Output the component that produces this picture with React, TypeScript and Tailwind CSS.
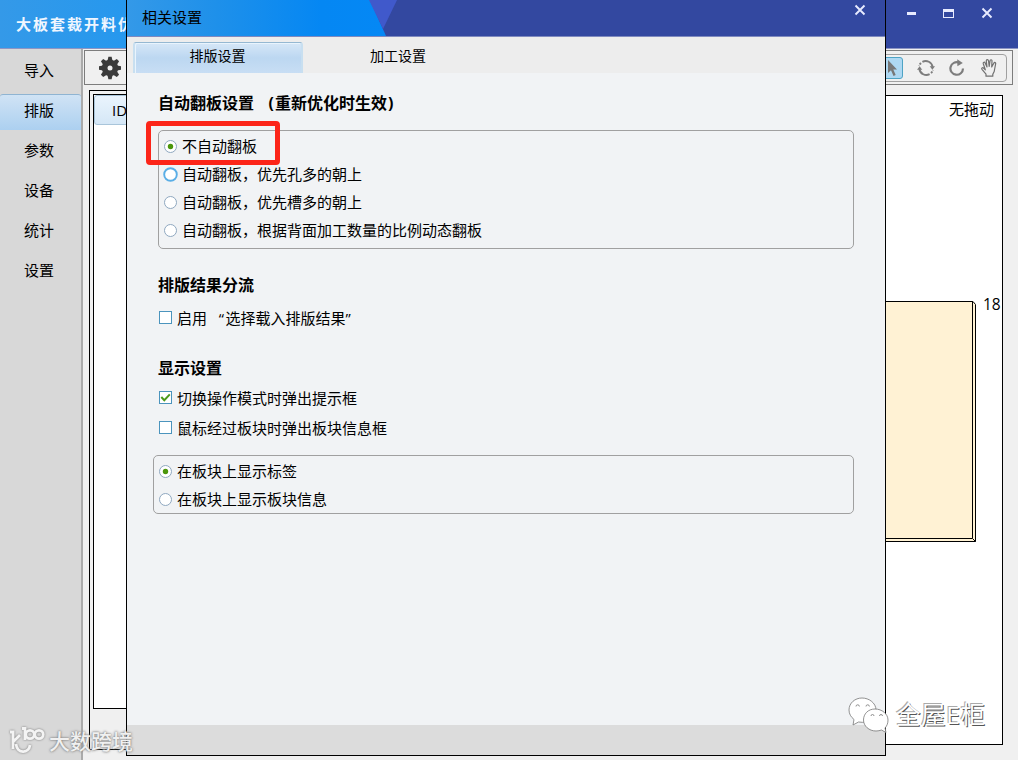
import React, { useState } from "react";
import clsx from "clsx";

const menuItems = ["导入", "排版", "参数", "设备", "统计", "设置"];

const flipModes = [
    "不自动翻板",
    "自动翻板，优先孔多的朝上",
    "自动翻板，优先槽多的朝上",
    "自动翻板，根据背面加工数量的比例动态翻板",
];

const labelModes = ["在板块上显示标签", "在板块上显示板块信息"];

const CloseIcon = () => (
    <svg width="12" height="12" viewBox="0 0 12 12" fill="none" stroke="#e8ebff" strokeWidth="1.9">
        <path d="M1.5 1.5 10.5 10.5M10.5 1.5 1.5 10.5" />
    </svg>
);

const GearIcon = () => (
    <svg width="22" height="24" viewBox="-11 -12 22 24" fill="#3b3b3b">
        {[0, 45, 90, 135].map((a) => (
            <path key={a} d="M-2.6 -7 L-1.6 -11.2 H1.6 L2.6 -7 V7 L1.6 11.2 H-1.6 L-2.6 7Z" transform={`rotate(${a})`} />
        ))}
        <circle r="8.2" />
        <circle r="2.5" fill="#f0f0f0" />
    </svg>
);

const Radio = ({ label, checked, hot, onSelect }: { label: string; checked: boolean; hot?: boolean; onSelect: () => void }) => (
    <button onClick={onSelect} className="flex h-7 items-center gap-1 text-left">
        <svg width="15" height="15" viewBox="0 0 15 15">
            <circle cx="7.5" cy="7.5" r={hot ? 6.3 : 6} fill="#fff" stroke={hot ? "#5aaee6" : "#8fa8c0"} strokeWidth={hot ? 1.9 : 1} />
            {checked && <circle cx="7.5" cy="7.5" r="2.7" fill="#4b960b" />}
        </svg>
        <span>{label}</span>
    </button>
);

const Check = ({ label, checked, onToggle }: { label: React.ReactNode; checked: boolean; onToggle: () => void }) => (
    <button onClick={onToggle} className="flex h-[30px] items-center gap-[5px] text-left">
        <span className="mb-0.5 flex h-[13px] w-[13px] items-center justify-center border border-[#4b94bd] bg-white">
            {checked && (
                <svg width="11" height="11" viewBox="0 0 11 11" fill="none" stroke="#4b9a1a" strokeWidth="2">
                    <path d="M1.3 5 4.3 8.2 9.8 2.4" />
                </svg>
            )}
        </span>
        <span>{label}</span>
    </button>
);

const SettingsDialog = () => {
    const [flip, setFlip] = useState(0);
    const [labelMode, setLabelMode] = useState(0);
    const [split, setSplit] = useState(false);
    const [modeTip, setModeTip] = useState(true);
    const [hoverTip, setHoverTip] = useState(false);

    return (
        <div className="absolute top-0 left-[126px] flex h-[756px] w-[760px] flex-col border-x border-b border-black bg-[#f1f3f5]">
            <header className="relative flex h-[37px] shrink-0 justify-between border-b border-[#7f8abf] bg-[#3348a0]">
                <svg className="absolute top-0 left-0" width="300" height="36" viewBox="0 0 300 36">
                    <defs>
                        <linearGradient id="dialogBlue">
                            <stop offset="0" stopColor="#3499e8" />
                            <stop offset="0.35" stopColor="#1e90ea" />
                            <stop offset="0.75" stopColor="#0587f3" />
                            <stop offset="1" stopColor="#0588f5" />
                        </linearGradient>
                    </defs>
                    <path d="M0 0H243L259 36H0Z" fill="url(#dialogBlue)" />
                    <path d="M242 0H270L256 29Z" fill="#4059cb" />
                </svg>
                <span className="relative pl-[15px] leading-[34px]">相关设置</span>
                <button className="mt-1 mr-[19px] h-3 w-3">
                    <CloseIcon />
                </button>
            </header>

            <nav className="flex h-9 shrink-0 bg-[#ededed] pt-[5px] pl-1.5 text-[14px]">
                <div className="h-[31px] w-[170px] rounded-t-[3px] border-x-2 border-t border-x-[#c8dff0] border-t-[#95b8d2] bg-gradient-to-b from-[#d6e7f7] via-[#bcd7f1] to-[#c8def4] pr-px text-center leading-[26px] shadow-[inset_1px_1px_0_#e9f4fd]">
                    排版设置
                </div>
                <div className="w-[190px] text-center leading-[27px]">加工设置</div>
            </nav>

            <section className="flex grow flex-col px-[31px]">
                <h3 className="mt-4 h-7 text-[16px] leading-7 font-bold whitespace-pre">
                    <span className="mr-0.5">自动翻板设置   </span>(<span className="mx-px">重新优化时生效</span>)
                </h3>
                <div className="relative mt-[13px] flex h-[119px] w-[696px] flex-col rounded-[5px] border border-[#a0a0a0] pt-px pl-1">
                    {flipModes.map((m, i) => (
                        <Radio key={m} label={m} checked={flip === i} hot={i === 1} onSelect={() => setFlip(i)} />
                    ))}
                    {/* highlight around the default choice */}
                    <div className="absolute -top-[10px] -left-[13px] h-[44px] w-[134px] rounded-[4px] border-[5px] border-[#fc2519]" />
                </div>

                <h3 className="mt-[22px] h-7 text-[16px] leading-7 font-bold">排版结果分流</h3>
                <div className="mt-1 pl-px">
                    <Check
                        label={
                            <span className="whitespace-pre">
                                启用   <span className="tracking-[1.5px]">“</span>选择载入排版结果<span className="tracking-[1px]">”</span>
                            </span>
                        }
                        checked={split}
                        onToggle={() => setSplit(!split)}
                    />
                </div>

                <h3 className="mt-[21px] h-7 text-[16px] leading-7 font-bold">显示设置</h3>
                <div className="mt-px flex flex-col pl-px">
                    <Check label="切换操作模式时弹出提示框" checked={modeTip} onToggle={() => setModeTip(!modeTip)} />
                    <Check label="鼠标经过板块时弹出板块信息框" checked={hoverTip} onToggle={() => setHoverTip(!hoverTip)} />
                </div>
                <div className="mt-3 -ml-[5px] flex h-[59px] w-[701px] flex-col rounded-[5px] border border-[#a0a0a0] pt-px pl-1">
                    {labelModes.map((m, i) => (
                        <Radio key={m} label={m} checked={labelMode === i} onSelect={() => setLabelMode(i)} />
                    ))}
                </div>
            </section>

            <footer className="h-[30px] shrink-0 bg-[#dcdcdc]" />
        </div>
    );
};

const Toolbar = () => (
    <div className="ml-px flex h-[35px] w-[929px] items-center justify-between border border-[#7d7d7d] bg-[#f0f0f0]">
        <div className="pl-3.5">
            <GearIcon />
        </div>
        <div className="mr-[5px] flex h-7 w-[240px] items-center justify-end rounded-[4px] border border-[#a0a0a0] pr-[9px]">
            <span className="mr-[14px] flex h-[22px] w-[22px] items-center justify-center rounded-[3px] border border-[#4ea3c4] bg-[#aed8f2]">
                <svg width="12" height="18" viewBox="0 0 12 18" fill="#777">
                    <path d="M2 1V14L5 11.3 7.5 17 9.7 16 7.3 10.5H11Z" />
                </svg>
            </span>
            <svg className="mr-[14px]" width="18" height="18" viewBox="0 0 18 18" fill="none" stroke="#7d7d7d" strokeWidth="1.9">
                <path d="M5.4 2.8A7 7 0 0 1 15.6 8M12.6 15.2A7 7 0 0 1 2.4 10" />
                <path d="M4 4A7 7 0 0 0 2.1 7M14 14A7 7 0 0 0 15.9 11" strokeDasharray="2 1.2" />
                <path d="M12.7 7.2H18L15.4 10.8ZM0 10.8H5.3L2.6 7.2Z" fill="#7d7d7d" stroke="none" />
            </svg>
            <svg className="mr-[16px]" width="16" height="18" viewBox="0 0 16 18" fill="none" stroke="#7d7d7d" strokeWidth="2.2">
                <path d="M10 3.6A6.3 6.3 0 1 0 14 9.5" />
                <path d="M8.2 0.2 13.8 3.9 8.4 7.2Z" fill="#7d7d7d" stroke="none" />
            </svg>
            <svg width="16" height="20" viewBox="0 0 16 20" fill="none" stroke="#707070" strokeWidth="1.2" strokeLinejoin="round" strokeLinecap="round">
                <path d="M5 18.2V16.2L1 11.3C.2 10.2 1.5 9.1 2.5 10L4.3 11.8 2.3 5.7C1.9 4.1 3.7 3.6 4.2 5L6 9 5.3 3C5.2 1.4 7.2 1.2 7.5 2.8L8.2 8.5 9 2.8C9.2 1.3 11.1 1.5 11 3L10.7 9 12.8 5.2C13.5 3.9 15 4.6 14.6 6L13.2 13.5 11.8 16.2V18.2Z" />
            </svg>
        </div>
    </div>
);

export default function App() {
    const [active, setActive] = useState("排版");

    return (
        <div className="relative flex h-[760px] w-[1018px] flex-col overflow-hidden bg-[#f0f0f0] font-['Open_Sans','Noto_Sans_CJK_SC',sans-serif] text-[15px] leading-5 text-black">
            <header className="flex h-[49px] shrink-0 items-center justify-between border-b border-[#8d95c4] bg-[linear-gradient(90deg,#3499e8_0,#2698ee_126px,#3348a0_500px)]">
                <h1 className="w-[126px] overflow-hidden pl-4 text-[15px] font-bold tracking-[2px] whitespace-nowrap text-[#f0f6ff]">大板套裁开料优</h1>
                <div className="mr-[25px] mb-[22px] flex items-center gap-[27px]">
                    <span className="h-[3px] w-[9px] bg-[#e8ebff]" />
                    <span className="h-[9px] w-[11px] border border-t-[3px] border-[#e8ebff]" />
                    <CloseIcon />
                </div>
            </header>

            <div className="flex grow">
                <aside className="flex w-[83px] shrink-0 flex-col border-r-2 border-[#aaa] bg-[#d8d8d8] pt-[5px]">
                    {menuItems.map((item) => (
                        <button key={item} onClick={() => setActive(item)} className="h-10 w-[81px]">
                            <span
                                className={clsx(
                                    "-mt-1 block h-9 border-t pr-[3px] leading-[31px]",
                                    active === item
                                        ? "rounded-t-[3px] border-[#8fb4d2] bg-gradient-to-b from-[#d0e3f5] to-[#acd0f0]"
                                        : "border-transparent"
                                )}
                            >
                                {item}
                            </span>
                        </button>
                    ))}
                </aside>

                <main className="flex grow flex-col pt-px">
                    <Toolbar />
                    <div className="flex pt-[5px] pl-1.5">
                        <div className="h-[660px] w-[300px] border border-black p-[3px]">
                            <div className="h-[615px] border border-black bg-white">
                                <div className="h-[30px] rounded-[3px] border border-[#a9c5da] bg-gradient-to-b from-[#eaf4fd] to-[#d5e7f6] pl-[17px] leading-[28px]">ID</div>
                            </div>
                        </div>
                        <div className="mt-[5px] flex h-[650px] w-[614px] flex-col items-end border border-black bg-white">
                            <span className="mt-[3px] pr-2">无拖动</span>
                            <div className="mt-[182px] flex">
                                <svg width="240" height="242" viewBox="0 0 240 242" fill="#fff2d4" stroke="#000">
                                    <path d="M-1 .5H237L239.5 3.5V240.5H-1" />
                                    <path d="M-1 .5H236.5V237.5H-1M236.5 237.5L239.5 240.5" />
                                </svg>
                                <span className="-mt-[7px] w-[26px] pl-[7px] text-[15.5px]">18</span>
                            </div>
                        </div>
                    </div>
                </main>
            </div>

            <SettingsDialog />

            <div className="absolute bottom-[5px] left-[8px] flex items-center gap-1">
                <svg className="drop-shadow-[0_0_1px_#777]" width="37" height="28" viewBox="0 0 37 28" fill="none" stroke="#f4f4f4" strokeWidth="2.8">
                    <path d="M2 5H5V22M5 15 12 8M8 17C9 27 21 27 22 18" />
                    <path d="M14 1.5H17V13" />
                    <circle cx="22" cy="7.5" r="4.2" />
                    <circle cx="31" cy="7.5" r="4.2" />
                </svg>
                <span className="text-[21px] font-medium leading-7 text-[#f0f0f0] [text-shadow:0_0_2px_#777,0_0_3px_#999]">大数跨境</span>
            </div>

            <div className="absolute top-[696px] left-[848px] flex items-center gap-[7px]">
                <svg width="41" height="38" viewBox="0 0 41 38" fill="#fff" stroke="#777" strokeWidth="0.8">
                    <path d="M14 2C7 2 1 7 1 14 1 18 3 21 6 23.5L5 29 10.5 26C22 28 28 21 28 14 28 7 21 2 14 2Z" />
                    <path d="M27 13C20 13 15.5 18 15.5 24 15.5 30 21 35 28 35 30 35 32 34.5 33.5 34L38 36.5 37 32C39 30 40 27 40 24 40 18 34 13 27 13Z" />
                    <g fill="none">
                        <path d="M8 10.5a1.7 1.7 0 1 1 3.4 0M18 10.5a1.7 1.7 0 1 1 3.4 0M23 20a1.5 1.5 0 1 1 3 0M31.5 20a1.5 1.5 0 1 1 3 0" />
                    </g>
                </svg>
                <span className="text-[24.5px] leading-[38px] tracking-[0.6px] text-white [text-shadow:1px_1px_0_#555,-1px_-1px_0_#aaa]">全屋E柜</span>
            </div>
        </div>
    );
}
